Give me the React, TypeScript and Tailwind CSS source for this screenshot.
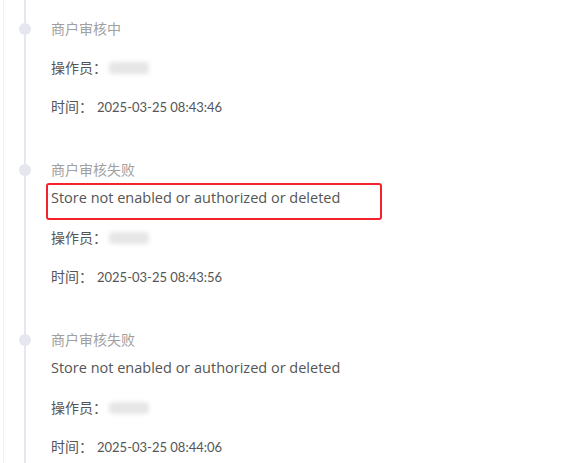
const font = { fontFamily: '"Lato", "Noto Sans CJK SC", sans-serif' };

type Item = {
  title: string;
  reason?: string;
  time: string;
  highlight?: boolean;
};

const ITEMS: Item[] = [
  { title: "商户审核中", time: "2025-03-25 08:43:46" },
  {
    title: "商户审核失败",
    reason: "Store not enabled or authorized or deleted",
    time: "2025-03-25 08:43:56",
    highlight: true,
  },
  {
    title: "商户审核失败",
    reason: "Store not enabled or authorized or deleted",
    time: "2025-03-25 08:44:06",
  },
];

// blurred-out operator name
function Masked() {
  return <span className="ml-[2px] inline-block h-[12px] w-[40px] rounded-sm bg-[#e6e6e6] blur-[2px]" />;
}

function TimelineRow({ item, first }: { item: Item; first: boolean }) {
  return (
    <div className="flex gap-5">
      {/* tail + node */}
      <div className="flex w-3 flex-col items-center">
        <div className={`w-[2px] bg-[#e4e7ed] ${first ? "h-[23px]" : "h-[47px]"}`} />
        <div className="h-3 w-3 shrink-0 rounded-full bg-[#e4e7ed]" />
        <div className="w-[2px] flex-1 bg-[#e4e7ed]" />
      </div>

      <div className={`flex flex-col ${first ? "pt-[19px]" : "pt-[43px]"}`}>
        <div className="text-[14px] leading-5 text-[#a0a0a0]">{item.title}</div>
        {item.reason && (
          <div
            className={`-mx-[5px] mt-[3px] -mb-[12px] w-[336px] rounded-[3px] border-2 px-[3px] pt-[3px] pb-[10px] ${
              item.highlight ? "border-[#f5222d]" : "border-transparent"
            }`}
          >
            <div
              className="text-[14.5px] leading-5 text-[#555]"
              style={{ fontFamily: '"Open Sans", sans-serif' }}
            >
              {item.reason}
            </div>
          </div>
        )}
        <div
          className={`${item.reason ? "mt-5" : "mt-[19px]"} flex items-center text-[14px] leading-5 text-[#555]`}
        >
          操作员：<Masked />
        </div>
        <div className="mt-[19px] flex items-center text-[14px] leading-5 text-[#555]">
          时间：<span className="ml-[4px] text-[13px]">{item.time}</span>
        </div>
      </div>
    </div>
  );
}

export default function App() {
  return (
    <div className="h-[463px] w-[584px] overflow-hidden bg-white pl-[3px]" style={font}>
      <div className="flex h-full flex-col border-l border-[#f0f0f0] pl-[15px]">
        {ITEMS.map((item, i) => (
          <TimelineRow key={i} item={item} first={i === 0} />
        ))}
        <div className="ml-[5px] w-[2px] flex-1 bg-[#e4e7ed]" />
      </div>
    </div>
  );
}
